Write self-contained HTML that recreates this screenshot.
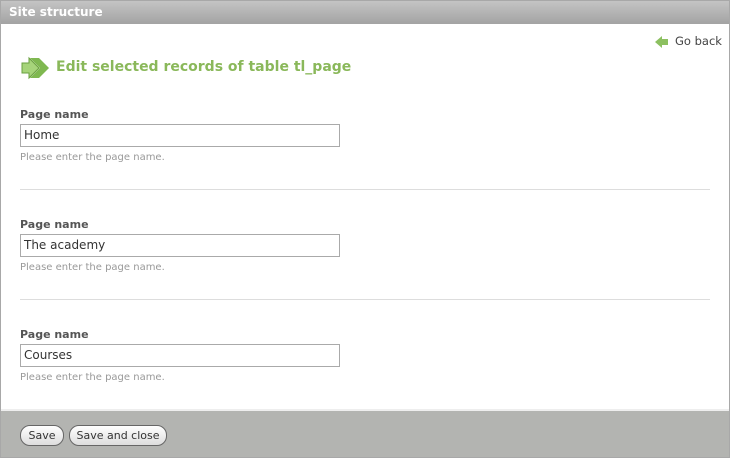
<!DOCTYPE html><html><head><style>
body{margin:0;width:730px;height:458px;font-family:"DejaVu Sans","Liberation Sans",sans-serif;background:#fff;overflow:hidden}
.wrap{position:absolute;left:0;top:0;width:728px;height:456px;border:1px solid #a8a8a8}
.hd{position:absolute;left:0;top:0;width:728px;height:23px;background:linear-gradient(#c4c4c4,#a3a3a3);color:#fff;font-weight:bold;font-size:12px;line-height:23px;padding-left:8px;box-sizing:border-box}
.back{position:absolute;left:655px;top:33px;font-size:11.5px;color:#444}
.back svg{position:absolute;left:-1px;top:1px}
h1{position:absolute;left:55px;top:58px;margin:0;font-size:14px;color:#8ab85a;font-weight:bold;white-space:nowrap}
.f{position:absolute;left:19px}
.f b{position:absolute;top:0;font-size:11px;line-height:14px;color:#555;white-space:nowrap}
.f .in{position:absolute;top:16px;left:0;width:315px;height:21px;border:1px solid #aaa;font-size:12px;line-height:21px;padding-left:3px;box-sizing:content-box;color:#333}
.f .h{position:absolute;top:44px;font-size:10px;color:#999;white-space:nowrap}
.hr{position:absolute;left:19px;width:690px;height:1px;background:#ddd}
.ft{position:absolute;left:0;top:408px;width:728px;height:48px;background:#b3b4b1;border-top:2px solid #eee;box-sizing:border-box}
.btn{position:absolute;top:14px;height:19px;border:1px solid #666;border-radius:10px;background:linear-gradient(#fff,#ddd);font-size:11px;line-height:19px;text-align:center;color:#333}
</style></head><body><div class="wrap">
<div class="hd">Site structure</div>
<div class="back"><svg width="14" height="14" viewBox="0 0 14 14"><path d="M0 7L7 1V4H13V10H7V13Z" fill="#8cc060"/></svg><span style="margin-left:19px">Go back</span></div>
<svg style="position:absolute;left:20px;top:54px" width="32" height="26" viewBox="0 0 32 26"><path d="M9 3H18L28 13L18 23H9L19 13Z" fill="#7fb850"/><path d="M1 8H8V3L18 13L8 23V18H1Z" fill="#a6d47a" stroke="#6aa040" stroke-width="1"/></svg>
<h1>Edit selected records of table tl_page</h1>
<div class="f" style="top:107px"><b>Page name</b><div class="in">Home</div><div class="h">Please enter the page name.</div></div>
<div class="hr" style="top:188px"></div>
<div class="f" style="top:217px"><b>Page name</b><div class="in">The academy</div><div class="h">Please enter the page name.</div></div>
<div class="hr" style="top:298px"></div>
<div class="f" style="top:327px"><b>Page name</b><div class="in">Courses</div><div class="h">Please enter the page name.</div></div>
<div class="ft"><div class="btn" style="left:19px;width:42px">Save</div><div class="btn" style="left:68px;width:96px">Save and close</div></div>
</div></body></html>
